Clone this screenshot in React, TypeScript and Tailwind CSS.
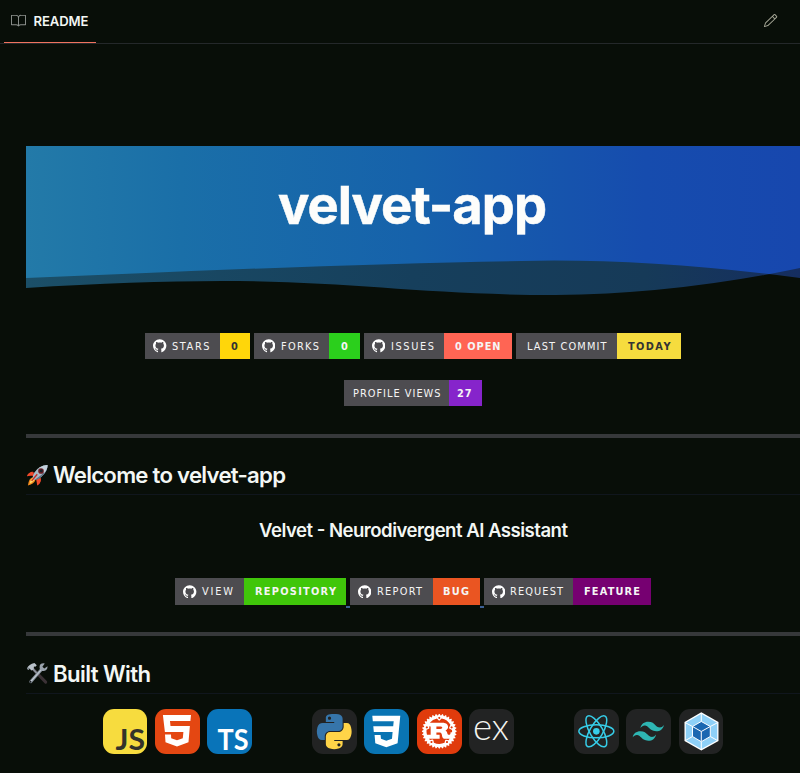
import React from "react";
import { GoBook, GoPencil } from "react-icons/go";
import { SiGithub, SiRust, SiTailwindcss } from "react-icons/si";

type BadgeProps = {
  label: string;
  value: string;
  left: string;
  right: string;
  labelFit: number;
  valueFit: number;
  icon?: boolean;
  pad?: string;
};

function FitText({ text, width, bold }: { text: string; width: number; bold?: boolean }) {
  return (
    <svg width={width} height="14" className="shrink-0 overflow-visible" fill="currentColor">
      <text
        x="0"
        y="11"
        textLength={text.length > 1 ? width : undefined}
        className={bold ? "text-[9.800px] font-bold" : "text-[9.800px]"}
      >
        {text}
      </text>
    </svg>
  );
}

function Badge({ label, value, left, right, labelFit, valueFit, icon = true, pad = "pl-[8px]" }: BadgeProps) {
  return (
    <div className="flex h-[26.4px] font-['DejaVu_Sans',sans-serif] text-[#f5f5f5]">
      <div className={`flex items-center bg-[#4d4c50] ${pad} ${left}`}>
        {icon && <SiGithub className="mr-[5.5px] size-[13.4px] shrink-0 text-white" />}
        <FitText text={label} width={labelFit} />
      </div>
      <div className={`flex items-center justify-center ${right}`}>
        <FitText text={value} width={valueFit} bold />
      </div>
    </div>
  );
}

function Rocket() {
  return (
    <svg viewBox="0 0 24 24" className="size-[22.500px]">
      <path d="M9 9 Q4 8 1 13 Q4 11 8 13Z M15 15 Q17 19 12 23 Q13 19 11 16Z" fill="#d92e22" />
      <path d="M7 8 Q2 9 1 13 L8 12Z M16 15 Q16 21 12 23 L11 17Z" fill="#f04a2b" />
      <path d="M7 14 Q3 15 2 23 Q9 21 10 17Z" fill="#f58b1c" />
      <path d="M7 15 Q4 18 4 21 Q7 19 9 17Z" fill="#ffe36b" />
      <path d="M23 1 Q14 1 9 9 Q7 12 7 15 L9 17 Q13 16 16 14 Q23 8 23 1Z" fill="#a9b9c6" />
      <path d="M23 1 Q21 9 13 14 L9 17 Q14 16 17 13 Q23 8 23 1Z" fill="#5f7184" />
      <path d="M23 1 Q18 1 14 4 L19.500 9.500 Q23 6 23 1Z" fill="#c3d1dc" />
      <circle cx="16" cy="7.500" r="3" fill="#6d1f25" />
      <circle cx="16.300" cy="7.200" r="1.600" fill="#1c222b" />
      <path d="M12 11 L6 18" stroke="#c92a25" strokeWidth="1.500" />
    </svg>
  );
}

function Tools() {
  return (
    <svg viewBox="0 0 24 24" className="size-[22.500px]">
      <path d="M7.500 7.500 L21 21.500" stroke="#3b3236" strokeWidth="3.200" strokeLinecap="round" />
      <path d="M6 6 L12 12.500" stroke="#8b929b" strokeWidth="2" />
      <path d="M16.500 8 L5 21" stroke="#87909a" strokeWidth="3.200" strokeLinecap="round" />
      <path d="M16.500 8 L5 21" stroke="#c5cdd5" strokeWidth="1.200" strokeLinecap="round" />
      <circle cx="4.800" cy="21" r="1" fill="#1c2024" />
      <path d="M20 1.500 Q14 1 14.500 6 Q15 10 19 9.600 Q23 9 23 4.500 L19.500 6.800 L17.500 5Z" fill="#9aa3ad" />
      <path d="M1 7 Q3 2 9 1 L11.500 3.500 L10 5 L8.500 4.800 L8 8 L5.500 9 L4 7 L2.500 8.500Z" fill="#b9c1c9" />
      <path d="M1 7 L2.500 8.500 L4 7 L3 5.800Z" fill="#7b838c" />
    </svg>
  );
}

function Tile({ bg, children }: { bg: string; children?: React.ReactNode }) {
  return (
    <svg viewBox="0 0 44.700 44.700" className={`size-[44.700px] shrink-0 overflow-visible rounded-[11px] ${bg}`}>
      {children}
    </svg>
  );
}

function WebpackMark() {
  return (
    <g>
      <path d="M22.300 3.300 L39.500 13 V32 L22.300 41.500 L5.500 32 V13Z" fill="#fff" />
      <path d="M22.300 4.800 L38.200 13.800 V31.200 L22.300 40 L6.800 31.200 V13.800Z" fill="#8ed0f7" />
      <path d="M22.300 12.500 L31.300 17.500 V27.500 L22.300 32.700 L13.500 27.500 V17.500Z" fill="#1b67b1" />
      <path
        d="M22.300 4.500 V12.500 L13.500 17.500 L6 13.500 M22.300 12.500 L31.300 17.500 L39 13.500 M13.500 17.500 V27.500 L6 31.800 M31.300 17.500 V27.500 L39 31.800 M13.500 27.500 L22.300 32.700 L31.300 27.500 M22.300 32.700 V40 M13.500 17.500 L22.300 22.500 L31.300 17.500 M22.300 22.500 V32"
        fill="none"
        stroke="#fff"
        strokeWidth="1"
      />
    </g>
  );
}

const WAVE_A = "M0 0 H774 V132 Q620 112 495 115 Q330 118 120 127 L0 132Z";
const WAVE_B = "M0 0 H774 V122 Q650 148 529 149 C400 149 320 135 195 135 Q110 135 0 142Z";

function Banner() {
  return (
    <svg width="774" height="150" viewBox="0 0 774 150" className="block">
      <defs>
        <linearGradient id="sea" x1="0" x2="1">
          <stop offset="0" stopColor="#237aa8" />
          <stop offset="0.200" stopColor="#1a6fa8" />
          <stop offset="0.500" stopColor="#1662ab" />
          <stop offset="0.800" stopColor="#164cae" />
          <stop offset="1" stopColor="#1747ae" />
        </linearGradient>
        <linearGradient id="foam" x1="0" x2="1">
          <stop offset="0" stopColor="#1b4f68" />
          <stop offset="0.500" stopColor="#163f5c" />
          <stop offset="0.800" stopColor="#163a58" />
          <stop offset="1" stopColor="#152d60" />
        </linearGradient>
        <clipPath id="waveB">
          <path d={WAVE_B} />
        </clipPath>
      </defs>
      <path d={WAVE_A} fill="url(#foam)" />
      <path d={WAVE_B} fill="url(#foam)" />
      <path d={WAVE_A} fill="url(#sea)" clipPath="url(#waveB)" />
      <text
        x="252"
        y="77.700"
        textLength="269"
        lengthAdjust="spacing"
        fill="#fdfdfb"
        stroke="#fdfdfb"
        strokeWidth="0.500"
        className="text-[52.500px] font-bold"
      >
        velvet-app
      </text>
    </svg>
  );
}

function SectionTitle({ icon, text, width }: { icon: React.ReactNode; text: string; width: number }) {
  return (
    <h2 className="flex h-[57.500px] items-center border-b border-[#10161d] pt-[18px] text-[22.200px] font-semibold">
      {icon}
      <svg width={width} height="28" className="ml-[4px] overflow-visible" fill="currentColor">
        <text x="0" y="22" textLength={width} lengthAdjust="spacing">
          {text}
        </text>
      </svg>
    </h2>
  );
}

export default function App() {
  return (
    <div className="h-[773px] w-[800px] overflow-hidden bg-[#080e08] font-['Inter','Liberation_Sans',sans-serif] text-[#f3f7f4]">
      <header className="flex h-[43.500px] items-stretch justify-between border-b border-[#24282a] pr-[22px] pl-[4px]">
        <div className="flex w-[92px] items-center border-b-[1.500px] border-[#f0735f] pl-[6.500px]">
          <GoBook className="size-[15px] text-[#8e938f]" />
          <span className="ml-[8px] pt-[2px] text-[13.100px] font-semibold tracking-[-0.100px]">README</span>
        </div>
        <GoPencil className="mt-[13px] size-[15px] text-[#a6a797]" />
      </header>
      <main className="ml-[26px] w-[774px] pt-[102.800px]">
        <Banner />
        <div className="mt-[36.700px] flex justify-center gap-[3.900px]">
          <Badge label="STARS" value="0" left="w-[74.700px]" right="w-[30px] bg-[#ffd60a] text-[#333]" labelFit={37.500} valueFit={7} />
          <Badge label="FORKS" value="0" left="w-[75.300px]" right="w-[30.700px] bg-[#2bcf1c]" labelFit={38} valueFit={7} />
          <Badge label="ISSUES" value="0 OPEN" left="w-[80.600px]" right="w-[67.700px] bg-[#ff6554]" labelFit={43} valueFit={45.500} />
          <Badge label="LAST COMMIT" value="TODAY" left="w-[101px]" right="w-[64px] bg-[#f6dc3e] text-[#333]" labelFit={79.500} valueFit={42.500} icon={false} pad="pl-[10.700px]" />
        </div>
        <div className="mt-[20.500px] flex justify-center">
          <Badge label="PROFILE VIEWS" value="27" left="w-[105.600px]" right="w-[32.700px] bg-[#8624cb] pr-[3px]" labelFit={87.500} valueFit={14.500} icon={false} pad="pl-[9px]" />
        </div>
        <div className="mt-[27.700px] h-[4px] bg-[#36383a]" />
        <SectionTitle icon={<Rocket />} text="Welcome to velvet-app" width={233} />
        <h3 className="flex h-[68.500px] items-center justify-center pt-[1px] text-[18.600px] font-semibold">
          <svg width="309" height="26" fill="currentColor" className="overflow-visible">
            <text x="0" y="20.300" textLength="309" lengthAdjust="spacing">
              Velvet - Neurodivergent AI Assistant
            </text>
          </svg>
        </h3>
        <div className="mt-[14.300px] flex justify-center">
          <Badge label="VIEW" value="REPOSITORY" left="w-[68.700px]" right="w-[102.100px] bg-[#40c60a]" labelFit={31} valueFit={81} />
          <div className="mt-[28px] h-[1.500px] w-[3.700px] bg-[#3c5f95]" />
          <Badge label="REPORT" value="BUG" left="w-[82.700px]" right="w-[47.200px] bg-[#ea5522]" labelFit={45} valueFit={26} />
          <div className="mt-[28px] h-[1.500px] w-[3.900px] bg-[#3c5f95]" />
          <Badge label="REQUEST" value="FEATURE" left="w-[89.700px]" right="w-[77.400px] bg-[#760071]" labelFit={53} valueFit={56} />
        </div>
        <div className="mt-[24.600px] h-[4px] bg-[#36383a]" />
        <SectionTitle icon={<Tools />} text="Built With" width={98} />
        <div className="mt-[15px] flex justify-center gap-[7.700px]">
          <Tile bg="bg-[#f7dc3e]">
            <text x="12.500" y="41" textLength="29.500" lengthAdjust="spacingAndGlyphs" fill="#33322a" className="font-['Lato',sans-serif] text-[28px] font-bold">
              JS
            </text>
          </Tile>
          <Tile bg="bg-[#e44712]">
            <path
              d="M7.900 6H36L35.400 12H15L15.500 17H34.900L33.500 33.300 22 37.400 10.500 33.300 10 25.500H16L16.200 29.300 22 31.300 27.800 29.300 28.400 23H9.900Z"
              fill="#fff"
            />
          </Tile>
          <Tile bg="bg-[#0974b9]">
            <text x="10.500" y="41" textLength="31" lengthAdjust="spacingAndGlyphs" fill="#fff" className="font-['Lato',sans-serif] text-[28px] font-bold">
              TS
            </text>
          </Tile>
          <div className="size-[44.700px]" />
          <Tile bg="bg-[#222323]">
            <g transform="translate(0.500 4.300) scale(0.340)">
              <path
                d="M63.391 1.988c-4.222.02-8.252.379-11.8 1.007-10.45 1.846-12.346 5.71-12.346 12.837v9.411h24.693v3.137H29.977c-7.176 0-13.46 4.313-15.426 12.521-2.268 9.405-2.368 15.275 0 25.096 1.755 7.311 5.947 12.519 13.124 12.519h8.491V67.234c0-8.151 7.051-15.34 15.426-15.34h24.665c6.866 0 12.346-5.654 12.346-12.548V15.833c0-6.693-5.646-11.72-12.346-12.837-4.244-.706-8.645-1.027-12.866-1.008zM50.037 9.557c2.55 0 4.634 2.117 4.634 4.721 0 2.593-2.083 4.69-4.634 4.69-2.56 0-4.633-2.097-4.633-4.69-.001-2.604 2.073-4.721 4.633-4.721z"
                fill="#3675aa"
              />
              <path
                d="M91.682 28.38v10.966c0 8.5-7.208 15.655-15.426 15.655H51.591c-6.756 0-12.346 5.783-12.346 12.549v23.515c0 6.691 5.818 10.628 12.346 12.547 7.816 2.297 15.312 2.713 24.665 0 6.216-1.801 12.346-5.423 12.346-12.547v-9.412H63.938v-3.138h37.012c7.176 0 9.852-5.005 12.348-12.519 2.578-7.735 2.467-15.174 0-25.096-1.774-7.145-5.161-12.521-12.348-12.521h-9.268zM77.809 87.927c2.561 0 4.634 2.097 4.634 4.692 0 2.602-2.074 4.719-4.634 4.719-2.55 0-4.633-2.117-4.633-4.719 0-2.595 2.083-4.692 4.633-4.692z"
                fill="#ffd448"
              />
            </g>
          </Tile>
          <Tile bg="bg-[#0974b3]">
            <path
              d="M8.300 6.700H36.300L33.600 34.300 22.300 38.300 11.300 34.300 10.600 26H16.600L17 29.700 22.300 31.700 28 29.700 28.600 23H9.800L9.300 17.300H29.200L29.700 12.300H8.800Z"
              fill="#fff"
            />
          </Tile>
          <Tile bg="bg-[#e03b0c]">
            <SiRust x="4.800" y="4.800" size={35} color="#fff" />
          </Tile>
          <Tile bg="bg-[#222323]">
            <text x="4" y="31" textLength="36" lengthAdjust="spacingAndGlyphs" fill="#f4f4f0" className="font-['Lato',sans-serif] text-[38px] font-light">
              ex
            </text>
          </Tile>
          <div className="size-[44.700px]" />
          <Tile bg="bg-[#222323]">
            <g fill="none" stroke="#36cde8" strokeWidth="1.500">
              <ellipse cx="22.350" cy="22.350" rx="17.500" ry="6.500" />
              <ellipse cx="22.350" cy="22.350" rx="17.500" ry="6.500" transform="rotate(60 22.350 22.350)" />
              <ellipse cx="22.350" cy="22.350" rx="17.500" ry="6.500" transform="rotate(120 22.350 22.350)" />
            </g>
            <circle cx="22.350" cy="22.350" r="3.300" fill="#36cde8" />
          </Tile>
          <Tile bg="bg-[#222323]">
            <SiTailwindcss x="6.500" y="6.500" size={31.500} color="#2eb6b3" />
          </Tile>
          <Tile bg="bg-[#222323]">
            <WebpackMark />
          </Tile>
        </div>
      </main>
    </div>
  );
}
